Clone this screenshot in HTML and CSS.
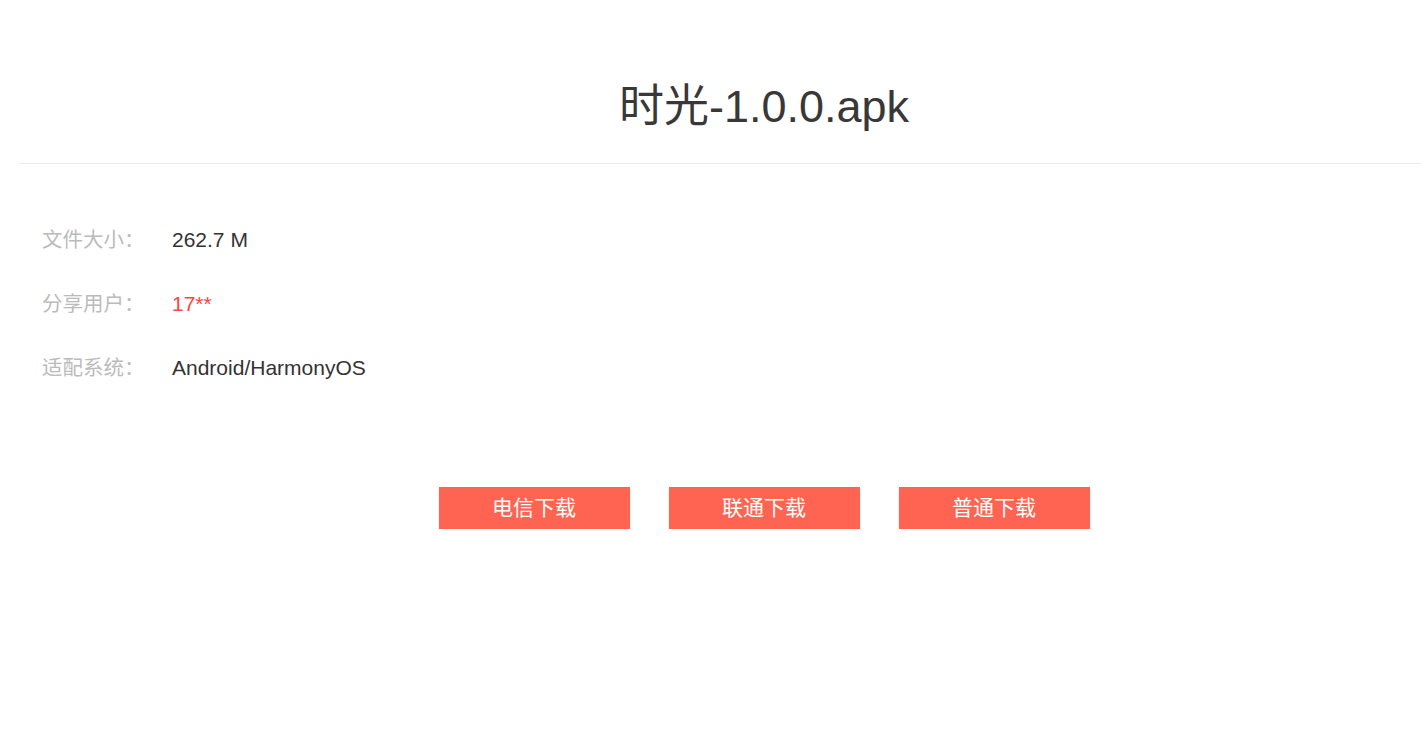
FILE: index.html
```html
<!DOCTYPE html>
<html lang="zh-CN">
<head>
<meta charset="utf-8">
<title>时光-1.0.0.apk</title>
<link rel="stylesheet" href="styles.css">
</head>
<body>
<div class="page">
  <header class="head">
    <h1 class="title">时光-1.0.0.apk</h1>
  </header>
  <section class="info">
    <div class="row"><span class="label">文件大小：</span><span class="value">262.7 M</span></div>
    <div class="row"><span class="label">分享用户：</span><span class="value red">17**</span></div>
    <div class="row"><span class="label">适配系统：</span><span class="value">Android/HarmonyOS</span></div>
  </section>
  <div class="buttons">
    <a class="btn">电信下载</a>
    <a class="btn">联通下载</a>
    <a class="btn">普通下载</a>
  </div>
</div>
</body>
</html>
```
FILE: styles.css
```css
html, body {
  margin: 0;
  padding: 0;
  background: #fff;
}
body {
  font-family: "Liberation Sans", Arial, "Noto Sans CJK SC", sans-serif;
  color: #333;
}
.page {
  margin-left: 19px;
}
.head {
  padding: 82px 0 31px 88px;
  border-bottom: 1px solid #eeeeee;
}
.title {
  margin: 0;
  font-size: 45px;
  font-weight: normal;
  line-height: 50px;
  text-align: center;
  color: #383838;
}
.info {
  padding: 44px 0 0 23px;
}
.row {
  display: flex;
  line-height: 64px;
  height: 64px;
}
.label {
  width: 130px;
  font-size: 20.5px;
  color: #bbbbbb;
}
.value {
  font-size: 21px;
  color: #333;
}
.value.red {
  color: #ff4444;
}
.buttons {
  display: flex;
  justify-content: center;
  gap: 39px;
  margin-top: 87px;
  padding-left: 88px;
}
.btn {
  display: block;
  width: 191px;
  height: 42px;
  line-height: 42px;
  text-align: center;
  background: #ff6452;
  color: #fff;
  font-size: 21px;
  box-shadow: 0 2px 2px rgba(0,0,0,0.15);
  cursor: pointer;
}
```
